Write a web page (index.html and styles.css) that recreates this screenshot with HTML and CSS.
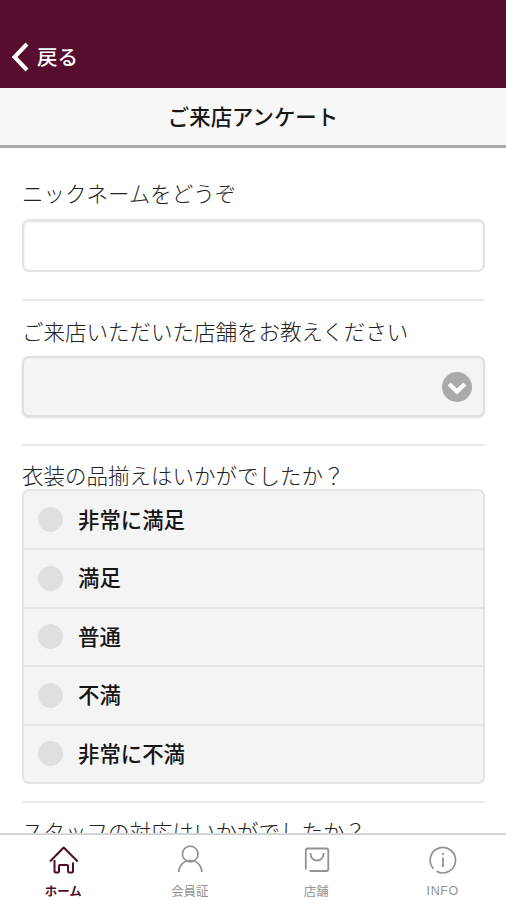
FILE: index.html
```
<!DOCTYPE html>
<html lang="ja">
<head>
<meta charset="utf-8">
<meta name="viewport" content="width=device-width, initial-scale=1">
<title>ご来店アンケート</title>
<link rel="stylesheet" href="styles.css">
</head>
<body>
<div class="app">
  <header class="header">
    <a class="back">
      <svg class="back-icon" viewBox="0 0 18 30" width="18" height="30"><path d="M16 2 3.500 15l12.500 13" fill="none" stroke="currentColor" stroke-width="4"/></svg>
      <span>戻る</span>
    </a>
  </header>
  <h1 class="title">ご来店アンケート</h1>
  <main class="form">
    <section class="question question-name">
      <label class="label" for="nickname">ニックネームをどうぞ</label>
      <input class="text-input" id="nickname" type="text">
    </section>
    <section class="question question-shop">
      <div class="label">ご来店いただいた店舗をお教えください</div>
      <div class="select">
        <svg viewBox="0 0 30 30" width="30" height="30"><circle cx="15" cy="15" r="15" fill="#aaa"/><path d="M7.200 12 15 19.500l7.800-7.500" fill="none" stroke="#fff" stroke-width="4.200"/></svg>
      </div>
    </section>
    <section class="question question-items">
      <div class="label">衣装の品揃えはいかがでしたか？</div>
      <ul class="options">
        <li class="option"><i class="radio"></i><span>非常に満足</span></li>
        <li class="option"><i class="radio"></i><span>満足</span></li>
        <li class="option"><i class="radio"></i><span>普通</span></li>
        <li class="option"><i class="radio"></i><span>不満</span></li>
        <li class="option"><i class="radio"></i><span>非常に不満</span></li>
      </ul>
    </section>
    <section class="question question-staff">
      <div class="label">スタッフの対応はいかがでしたか？</div>
    </section>
  </main>
  <nav class="tabs">
    <a class="tab tab-active">
      <svg class="tab-icon" viewBox="0 0 32 32"><path d="M3 17.500 16.700 3.500l14 14M7.500 16v11q0 1.500 1.500 1.500h1.500q1.500 0 1.500-1.500v-5q0-1 1-1h7q1 0 1 1v5q0 1.500 1.500 1.500H24.500q1.500 0 1.500-1.500V18.500" fill="none" stroke="currentColor" stroke-width="2" stroke-linejoin="round"/></svg>
      <span>ホーム</span>
    </a>
    <a class="tab">
      <svg class="tab-icon" viewBox="0 0 32 32"><circle cx="16.200" cy="10" r="7.800" fill="none" stroke="currentColor" stroke-width="1.700"/><path d="M4.800 28a11.500 11.500 0 0 1 23 0" fill="none" stroke="currentColor" stroke-width="1.700"/></svg>
      <span>会員証</span>
    </a>
    <a class="tab">
      <svg class="tab-icon" viewBox="0 0 32 32"><path d="M5.800 25.500V6.500q0-2 2-2h18.500q2 0 2 2v18.500q0 2-2 2H9.500" fill="none" stroke="currentColor" stroke-width="1.800"/><path d="M10.500 9v1a6.500 6.500 0 0 0 13 0v-1" fill="none" stroke="currentColor" stroke-width="1.800"/></svg>
      <span>店舗</span>
    </a>
    <a class="tab tab-info">
      <svg class="tab-icon" viewBox="0 0 32 32"><path d="M6.500 24.800A12.700 12.700 0 1 1 9.500 27.200M5.500 23.400l-.400-.800" fill="none" stroke="currentColor" stroke-width="1.700"/><path d="M16 13.500v9.500M16 9v2" fill="none" stroke="currentColor" stroke-width="1.800"/></svg>
      <span>INFO</span>
    </a>
  </nav>
</div>
</body>
</html>
```
FILE: styles.css
```
* { box-sizing: border-box; }

body {
  margin: 0;
  background: #fff;
  color: #222;
  font-family: "Noto Sans CJK JP", sans-serif;
  font-size: 21.4px;
}

.app {
  display: flex;
  flex-direction: column;
  height: 900px;
  overflow: hidden;
}

.header {
  flex: none;
  display: flex;
  align-items: flex-end;
  height: 88px;
  padding: 0 11px 16px;
  background: #570e2e;
  color: #fff;
}

.back {
  display: flex;
  align-items: center;
  gap: 8px;
  height: 30px;
  font-size: 20.5px;
  font-weight: 500;
}

.back span { padding-bottom: 2px; }

.back-icon { display: block; }

.title {
  flex: none;
  height: 60px;
  margin: 0;
  border-bottom: 3px solid #aaa;
  background: #f8f8f8;
  color: #181818;
  font-size: 21.4px;
  font-weight: 500;
  line-height: 55px;
  text-align: center;
}

.form {
  flex: 1;
  min-height: 0;
  overflow: hidden;
  padding: 0 21px 0 22px;
}

.question + .question { border-top: 2px solid #e9e9e9; }

.label {
  display: block;
  height: 32px;
  line-height: 30px;
  font-size: 21.5px;
  font-weight: 300;
  white-space: nowrap;
}

.question-name { height: 151px; padding-top: 30px; }

.question-name .label { height: 41px; }

.text-input {
  display: block;
  width: 100%;
  height: 53px;
  padding: 0 10px;
  border: 2px solid #e3e3e3;
  border-radius: 7px;
  background: #fff;
  box-shadow: inset 0 1px 2px #ddd;
  font: inherit;
}

.question-shop { height: 145px; padding-top: 15px; }

.question-shop .label { height: 40px; }

.select {
  display: flex;
  align-items: center;
  justify-content: flex-end;
  height: 61px;
  padding-right: 11px;
  border: 2px solid #e0e0e0;
  border-radius: 7px;
  background: #f4f4f4;
  box-shadow: 0 1px 2px #ddd;
}

.question-items { height: 357px; padding-top: 14px; }

.question-items .label { height: 29px; }

.options {
  display: grid;
  grid-template-rows: 57px repeat(3, 58.5px) 1fr;
  height: 295px;
  margin: 0;
  padding: 0;
  border: 2px solid #e4e4e4;
  border-radius: 7px;
  background: #f4f4f4;
  list-style: none;
}

.option {
  display: flex;
  align-items: center;
  gap: 15px;
  padding-left: 14px;
  color: #151515;
  font-weight: 500;
}

.option span { padding-bottom: 3px; }

.option + .option { border-top: 2px solid #e4e4e4; }

.radio {
  width: 25px;
  height: 25px;
  border-radius: 50%;
  background: #dfdfdf;
}

.question-staff { padding-top: 13px; }

.tabs {
  flex: none;
  display: grid;
  grid-template-columns: repeat(4, 1fr);
  height: 67px;
  border-top: 2px solid #d4d4d4;
  background: #fff;
}

.tab {
  display: flex;
  flex-direction: column;
  align-items: center;
  gap: 5px;
  padding-top: 9px;
  color: #929292;
  font-size: 12.4px;
  font-weight: 400;
  line-height: 20px;
}

.tab-active { color: #4c0d28; font-weight: 700; }

.tab-icon { display: block; width: 32px; height: 32px; }

.tab-info { font-family: "Liberation Sans", sans-serif; letter-spacing: 0.7px; }
```
